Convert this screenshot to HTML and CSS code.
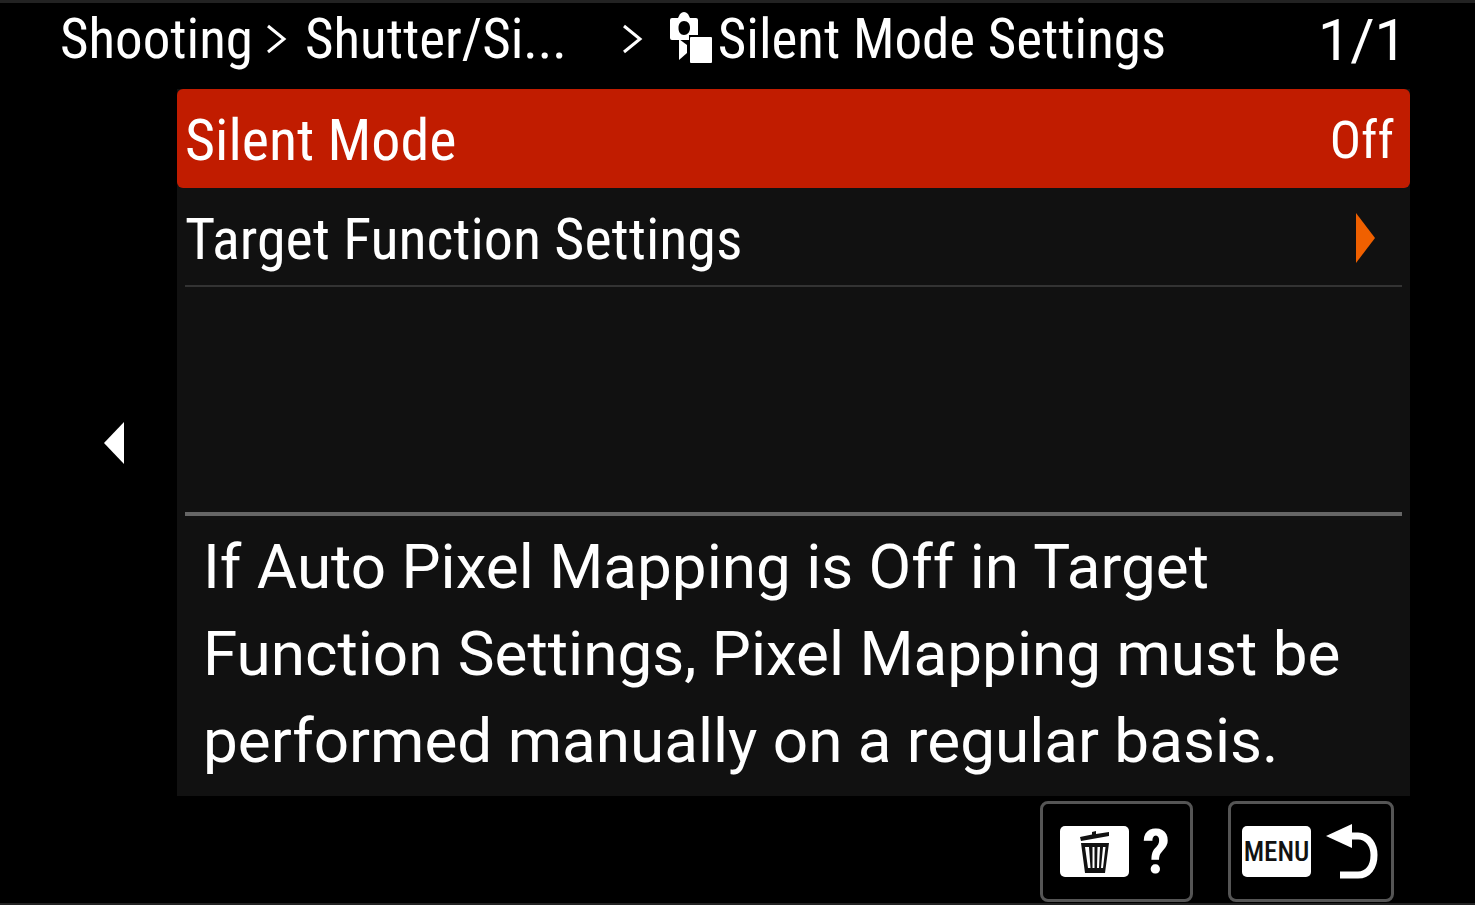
FILE: index.html
```html
<!DOCTYPE html>
<html lang="en">
<head>
<meta charset="utf-8">
<title>Silent Mode Settings</title>
<link rel="stylesheet" href="styles.css">
</head>
<body>
<div class="screen">
  <header class="header">
    <nav class="breadcrumb" aria-label="Breadcrumb">
      <a class="crumb crumb-root" href="#">Shooting</a>
      <svg class="chevron" viewBox="0 0 20 30" aria-hidden="true"><path d="M1 2L17 15L1 28"/></svg>
      <a class="crumb crumb-group" href="#">Shutter/Si...</a>
      <svg class="chevron" viewBox="0 0 20 30" aria-hidden="true"><path d="M1 2L17 15L1 28"/></svg>
      <svg class="mode-icon" viewBox="0 0 42 54" aria-hidden="true">
        <path fill-rule="evenodd" d="M2 6H8L10 2Q14 -2 18 2L20 6H26Q28 6 28 8V23H19V28H2Q0 28 0 26V8Q0 6 2 6ZM14 9C10.500 9 8.500 12 8.500 16S10.500 23 14 23S20 20 20 16S18 9 14 9Z"/>
        <path d="M9 27L17 33V41L9 48Z"/>
        <rect x="20" y="25" width="22" height="26" rx="1"/>
      </svg>
      <span class="crumb" aria-current="page">Silent Mode Settings</span>
    </nav>
    <span class="page-count">1/1</span>
  </header>
  <main class="main">
    <button class="back" type="button" aria-label="Back">
      <svg viewBox="0 0 20 42" aria-hidden="true"><path d="M20 0V42L0 21Z"/></svg>
    </button>
    <section class="panel">
      <button class="row row-selected" type="button"><span>Silent Mode</span><span class="value">Off</span></button>
      <button class="row" type="button"><span>Target Function Settings</span>
        <svg class="more" viewBox="0 0 20 50" aria-hidden="true"><path d="M1 0L20 25L1 50Z"/></svg>
      </button>
      <p class="help">If Auto Pixel Mapping is Off in Target Function Settings, Pixel Mapping must be performed manually on a regular basis.</p>
    </section>
  </main>
  <footer class="footer">
    <button class="key key-help" type="button" aria-label="Help">
      <span class="cap">
        <svg class="trash" viewBox="0 0 30 42" aria-hidden="true">
          <path d="M0 6L12 3.500V1L16 0V3L29 1V5L1 10Z"/>
          <path fill-rule="evenodd" d="M1 12H29L25 42H5ZM5 16L8 37H10.500L9 16ZM12.500 16V37H14.500V16ZM17.500 16L17 37H19L20 16ZM23 16L21 37H23L25.500 16Z"/>
        </svg>
      </span>
      <span class="question">?</span>
    </button>
    <button class="key key-menu" type="button" aria-label="MENU: return">
      <span class="cap">MENU</span>
      <svg class="return" viewBox="0 0 52 56" aria-hidden="true"><path d="M0 12L26 0V24Z"/><path class="tail" d="M25 12H32C43 12 48 22 48 31C48 43 42 51 32 51H14"/></svg>
    </button>
  </footer>
</div>
</body>
</html>
```
FILE: styles.css
```css
* { box-sizing: border-box; }
body {
  margin: 0;
  background: #000;
  color: #fff;
  font-family: "Roboto Condensed", Roboto, sans-serif;
}
button { font: inherit; color: inherit; background: none; border: 0; padding: 0; text-align: left; }
a { color: inherit; text-decoration: none; }
svg { display: block; fill: currentColor; flex: none; }
.screen {
  display: flex;
  flex-direction: column;
  min-height: 100vh;
  border-top: 3px solid #222;
  border-bottom: 2px solid #222;
}
.header {
  display: flex;
  justify-content: space-between;
  height: 86px;
  padding: 0 68px 0 60px;
  font-size: 55px;
  line-height: 74px;
  white-space: nowrap;
}
.breadcrumb { display: flex; align-items: center; height: 72px; }
.crumb-root { margin-right: 14px; }
.crumb-group { margin: 0 56px 0 18px; }
.chevron { width: 20px; height: 30px; fill: none; stroke: currentColor; stroke-width: 3; }
.mode-icon { width: 42px; height: 54px; margin: 0 6px 0 27px; }
.page-count { font-family: Roboto, sans-serif; font-size: 58px; }
.main { display: flex; flex: 1; padding-right: 65px; }
.back { width: 177px; padding-left: 104px; }
.back svg { width: 20px; height: 42px; }
.panel { flex: 1; display: flex; flex-direction: column; background: #111; }
.row {
  position: relative;
  display: flex;
  align-items: center;
  justify-content: space-between;
  height: 99px;
  padding: 0 16px 0 8px;
  font-size: 58px;
}
.row::after {
  content: "";
  position: absolute;
  inset: auto 8px 0 8px;
  height: 2px;
  background: #333;
}
.row-selected { background: #c11c00; border-radius: 6px; }
.row-selected::after { display: none; }
.row span { padding-top: 2px; }
.row .value { padding-top: 4px; font-size: 52px; }
.more { width: 20px; height: 50px; margin-right: 19px; fill: #f06000; }
.help {
  margin: auto 8px 0;
  padding: 7px 18px 12px;
  border-top: 4px solid #666;
  font-family: Roboto, sans-serif;
  font-size: 62px;
  line-height: 87px;
}
.footer { display: flex; justify-content: flex-end; gap: 35px; padding: 5px 81px 1px 0; }
.key {
  display: flex;
  align-items: center;
  height: 101px;
  border: 3px solid #555;
  border-radius: 8px;
}
.key-help { gap: 13px; padding: 0 20px 0 17px; }
.key-menu { gap: 15px; padding: 0 13px 0 11px; }
.cap {
  display: flex;
  align-items: center;
  justify-content: center;
  width: 69px;
  height: 51px;
  border-radius: 5px;
  background: #fff;
  color: #111;
  font-size: 27px;
  font-weight: 500;
}
.trash { width: 30px; height: 42px; }
.question { font-size: 62px; font-weight: 700; line-height: 72px; }
.return { width: 52px; height: 56px; }
.tail { fill: none; stroke: currentColor; stroke-width: 7; }
```
